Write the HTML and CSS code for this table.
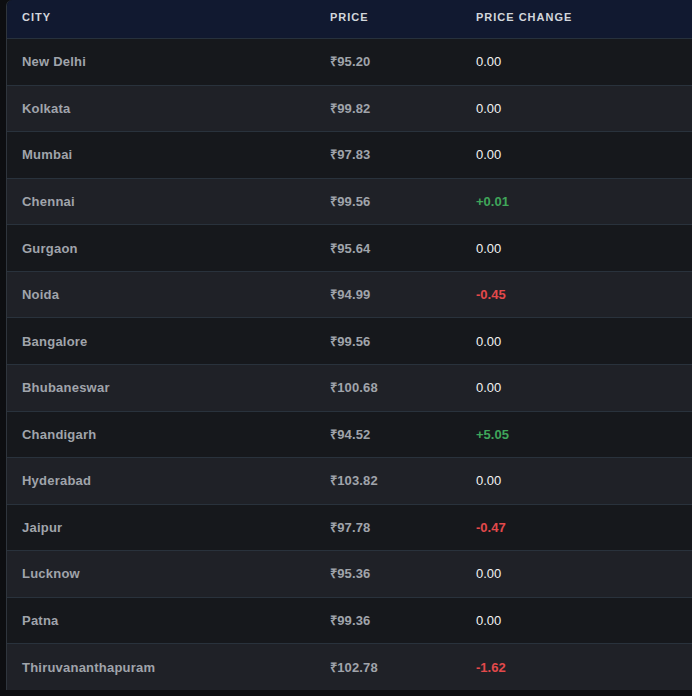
FILE: index.html
```html
<!DOCTYPE html>
<html lang="en">
<head>
<meta charset="utf-8">
<title>Fuel prices by city</title>
<link rel="stylesheet" href="styles.css">
</head>
<body>
<div class="panel">
  <table class="prices">
    <colgroup>
      <col class="col-city">
      <col class="col-price">
      <col class="col-change">
    </colgroup>
    <thead>
      <tr><th>City</th><th>Price</th><th>Price Change</th></tr>
    </thead>
    <tbody>
      <tr><td class="city">New Delhi</td><td class="price">₹95.20</td><td class="chg">0.00</td></tr>
      <tr><td class="city">Kolkata</td><td class="price">₹99.82</td><td class="chg">0.00</td></tr>
      <tr><td class="city">Mumbai</td><td class="price">₹97.83</td><td class="chg">0.00</td></tr>
      <tr><td class="city">Chennai</td><td class="price">₹99.56</td><td class="chg up">+0.01</td></tr>
      <tr><td class="city">Gurgaon</td><td class="price">₹95.64</td><td class="chg">0.00</td></tr>
      <tr><td class="city">Noida</td><td class="price">₹94.99</td><td class="chg down">-0.45</td></tr>
      <tr><td class="city">Bangalore</td><td class="price">₹99.56</td><td class="chg">0.00</td></tr>
      <tr><td class="city">Bhubaneswar</td><td class="price">₹100.68</td><td class="chg">0.00</td></tr>
      <tr><td class="city">Chandigarh</td><td class="price">₹94.52</td><td class="chg up">+5.05</td></tr>
      <tr><td class="city">Hyderabad</td><td class="price">₹103.82</td><td class="chg">0.00</td></tr>
      <tr><td class="city">Jaipur</td><td class="price">₹97.78</td><td class="chg down">-0.47</td></tr>
      <tr><td class="city">Lucknow</td><td class="price">₹95.36</td><td class="chg">0.00</td></tr>
      <tr><td class="city">Patna</td><td class="price">₹99.36</td><td class="chg">0.00</td></tr>
      <tr><td class="city">Thiruvananthapuram</td><td class="price">₹102.78</td><td class="chg down">-1.62</td></tr>
    </tbody>
  </table>
</div>
</body>
</html>
```
FILE: styles.css
```css
html, body {
  margin: 0;
  padding: 0;
  background: #0d0e11;
  overflow: hidden;
  height: 696px;
}

body {
  font-family: "Liberation Sans", Arial, sans-serif;
}

.panel {
  margin-left: 6px;
  width: 700px;
  border-left: 1px solid #2f353d;
  border-top-left-radius: 6px;
  overflow: hidden;
  background: #121317;
}

.prices {
  width: 100%;
  border-collapse: separate;
  border-spacing: 0;
  table-layout: fixed;
}

.col-city { width: 308px; }
.col-price { width: 146px; }

.prices th {
  background: #111930;
  color: #d3d6dc;
  font-size: 11px;
  font-weight: 700;
  line-height: 13px;
  letter-spacing: 1px;
  text-transform: uppercase;
  text-align: left;
  padding: 11px 15px 0;
  height: 39px;
  box-sizing: border-box;
  vertical-align: top;
  border-bottom: 1px solid #27313d;
}

.prices td {
  font-size: 13px;
  line-height: 15px;
  padding: 0 15px;
  height: 46.57px;
  box-sizing: border-box;
  vertical-align: middle;
  border-top: 1px solid #29323c;
}

.prices tbody tr:first-child td {
  border-top: 0;
  height: 45.57px;
}

.prices tbody tr:nth-child(odd) { background: #16181c; }
.prices tbody tr:nth-child(even) { background: #1f2127; }

.city, .price {
  color: #a0a4ab;
  font-weight: 700;
}

.city { letter-spacing: 0.22px; }
.price { letter-spacing: 0.15px; }

.chg {
  color: #f2f2f2;
  font-weight: 400;
}

.chg.up {
  color: #3fa65a;
  font-weight: 700;
}

.chg.down {
  color: #e3494b;
  font-weight: 700;
}
```
